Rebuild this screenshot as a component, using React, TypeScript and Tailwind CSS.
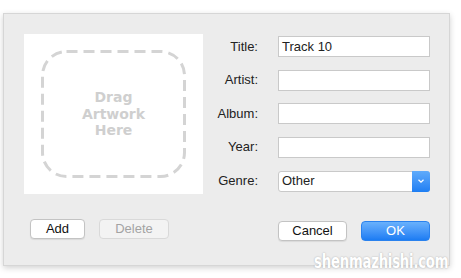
export default function App() {
  const fields = ["Title:", "Artist:", "Album:", "Year:"];

  return (
    <div className="relative w-[461px] h-[278px] bg-white overflow-hidden" style={{ fontFamily: '"Liberation Sans", Arial, sans-serif' }}>
      <div className="ml-[3px] mt-[13px] w-[447px] h-[253px] bg-[#ececec] border border-[#d6d6d6] shadow-[0_2px_6px_rgba(0,0,0,0.18)] pl-[20px] pt-[20px]">
        <div className="flex">
          {/* Artwork well */}
          <div className="w-[179px] h-[160px] bg-white flex items-center justify-center">
            <div className="w-[145px] h-[128px] relative flex items-center justify-center">
              <svg width="145" height="128" viewBox="0 0 145 128" className="absolute inset-0">
                <rect x="1.5" y="1.5" width="142" height="125" rx="24" fill="none" stroke="#d4d4d4" strokeWidth="3" strokeDasharray="11 6" />
              </svg>
              <div className="text-center font-bold text-[14px] leading-[16.5px] text-[#cfcfcf]" style={{ fontFamily: '"DejaVu Sans", Verdana, sans-serif' }}>
                Drag<br />Artwork<br />Here
              </div>
            </div>
          </div>

          {/* Form */}
          <div className="pt-[2px] flex flex-col gap-[12.5px] text-[13px] text-[#222]">
            {fields.map((f, i) => (
              <div key={f} className="flex items-center">
                <div className="w-[55px] text-right">{f}</div>
                <div className="ml-[20px] w-[152px] h-[21px] bg-white border border-[#c9c9c9] px-[3px] flex items-center">
                  {i === 0 ? "Track 10" : ""}
                </div>
              </div>
            ))}
            <div className="flex items-center mt-[0.5px]">
              <div className="w-[55px] text-right">Genre:</div>
              <div className="ml-[20px] w-[152px] h-[21px] bg-white border border-[#c9c9c9] rounded-[3px] flex items-center">
                <div className="flex-1 pl-[3px]">Other</div>
                <div className="w-[18px] h-[21px] -mr-px rounded-r-[3px] bg-gradient-to-b from-[#5fabfb] to-[#1d7ef3] flex items-center justify-center">
                  <svg width="8" height="6" viewBox="0 0 8 6">
                    <path d="M1.5 1.8 L4 4.2 L6.5 1.8" fill="none" stroke="white" strokeWidth="1.2" />
                  </svg>
                </div>
              </div>
            </div>
          </div>
        </div>

        {/* Buttons */}
        <div className="flex items-start mt-[25px] text-[13px]">
          <div className="ml-[6px] w-[55px] h-[20px] bg-white border border-[#c3c3c3] rounded-[4px] shadow-[0_1px_1px_rgba(0,0,0,0.08)] flex items-center justify-center text-[#111]">
            Add
          </div>
          <div className="ml-[14px] w-[70px] h-[20px] bg-[#f3f3f3] border border-[#d9d9d9] rounded-[4px] flex items-center justify-center text-[#a3a3a3]">
            Delete
          </div>
          <div className="ml-[109px] mt-[2px] w-[69px] h-[20px] bg-white border border-[#c3c3c3] rounded-[4px] shadow-[0_1px_1px_rgba(0,0,0,0.08)] flex items-center justify-center text-[#111]">
            Cancel
          </div>
          <div className="ml-[14px] mt-[2px] w-[69px] h-[20px] rounded-[4px] bg-gradient-to-b from-[#69b1fc] to-[#1b7cf3] border border-[#2a82ee] flex items-center justify-center text-white">
            OK
          </div>
        </div>
      </div>

      {/* watermark */}
      <div
        className="absolute right-[13px] top-[251px] whitespace-nowrap text-white font-bold text-[20px] leading-none origin-right scale-x-[0.66] tracking-[-0.3px]"
        style={{ fontFamily: '"DejaVu Sans", sans-serif', textShadow: "0 0 2px rgba(0,0,0,0.3)" }}
      >
        shenmazhishi.com
      </div>
    </div>
  );
}
